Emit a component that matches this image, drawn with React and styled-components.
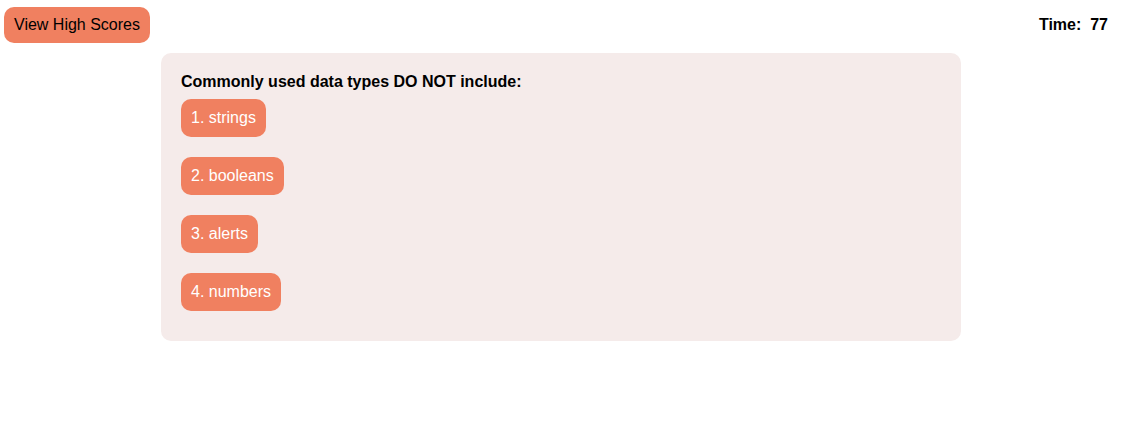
import React from "react";
import styled, { createGlobalStyle } from "styled-components";

const Global = createGlobalStyle`
  body {
    margin: 0;
    background: #ffffff;
    font-family: "Liberation Sans", Arial, sans-serif;
    font-size: 16px;
  }
`;

const Header = styled.div`
  display: flex;
  justify-content: space-between;
  align-items: center;
  padding: 7px 14px 0 4px;
  height: 36px;
`;

const HighScores = styled.button`
  background: #f08060;
  color: #000;
  border: none;
  border-radius: 10px;
  font: inherit;
  line-height: 18px;
  padding: 9px 10px;
  cursor: pointer;
`;

const Timer = styled.div`
  font-weight: bold;
  white-space: pre;
`;

const Card = styled.div`
  width: 800px;
  box-sizing: border-box;
  margin: 10px auto 0;
  padding: 20px 20px 30px;
  background: #f5ebea;
  border-radius: 10px;
`;

const Question = styled.h2`
  margin: 0 0 8px;
  font-size: 16px;
  line-height: 18px;
  font-weight: bold;
`;

const Choices = styled.div`
  display: flex;
  flex-direction: column;
  align-items: flex-start;
  gap: 20px;
`;

const Choice = styled.button`
  background: #f08060;
  color: #fff;
  border: none;
  border-radius: 10px;
  font: inherit;
  line-height: 18px;
  padding: 10px 10px;
  cursor: pointer;
`;

const choices = ["1. strings", "2. booleans", "3. alerts", "4. numbers"];

export default function App() {
  return (
    <>
      <Global />
      <Header>
        <HighScores>View High Scores</HighScores>
        <Timer>{"Time:  77"}</Timer>
      </Header>
      <Card>
        <Question>Commonly used data types DO NOT include:</Question>
        <Choices>
          {choices.map((c) => (
            <Choice key={c}>{c}</Choice>
          ))}
        </Choices>
      </Card>
    </>
  );
}
